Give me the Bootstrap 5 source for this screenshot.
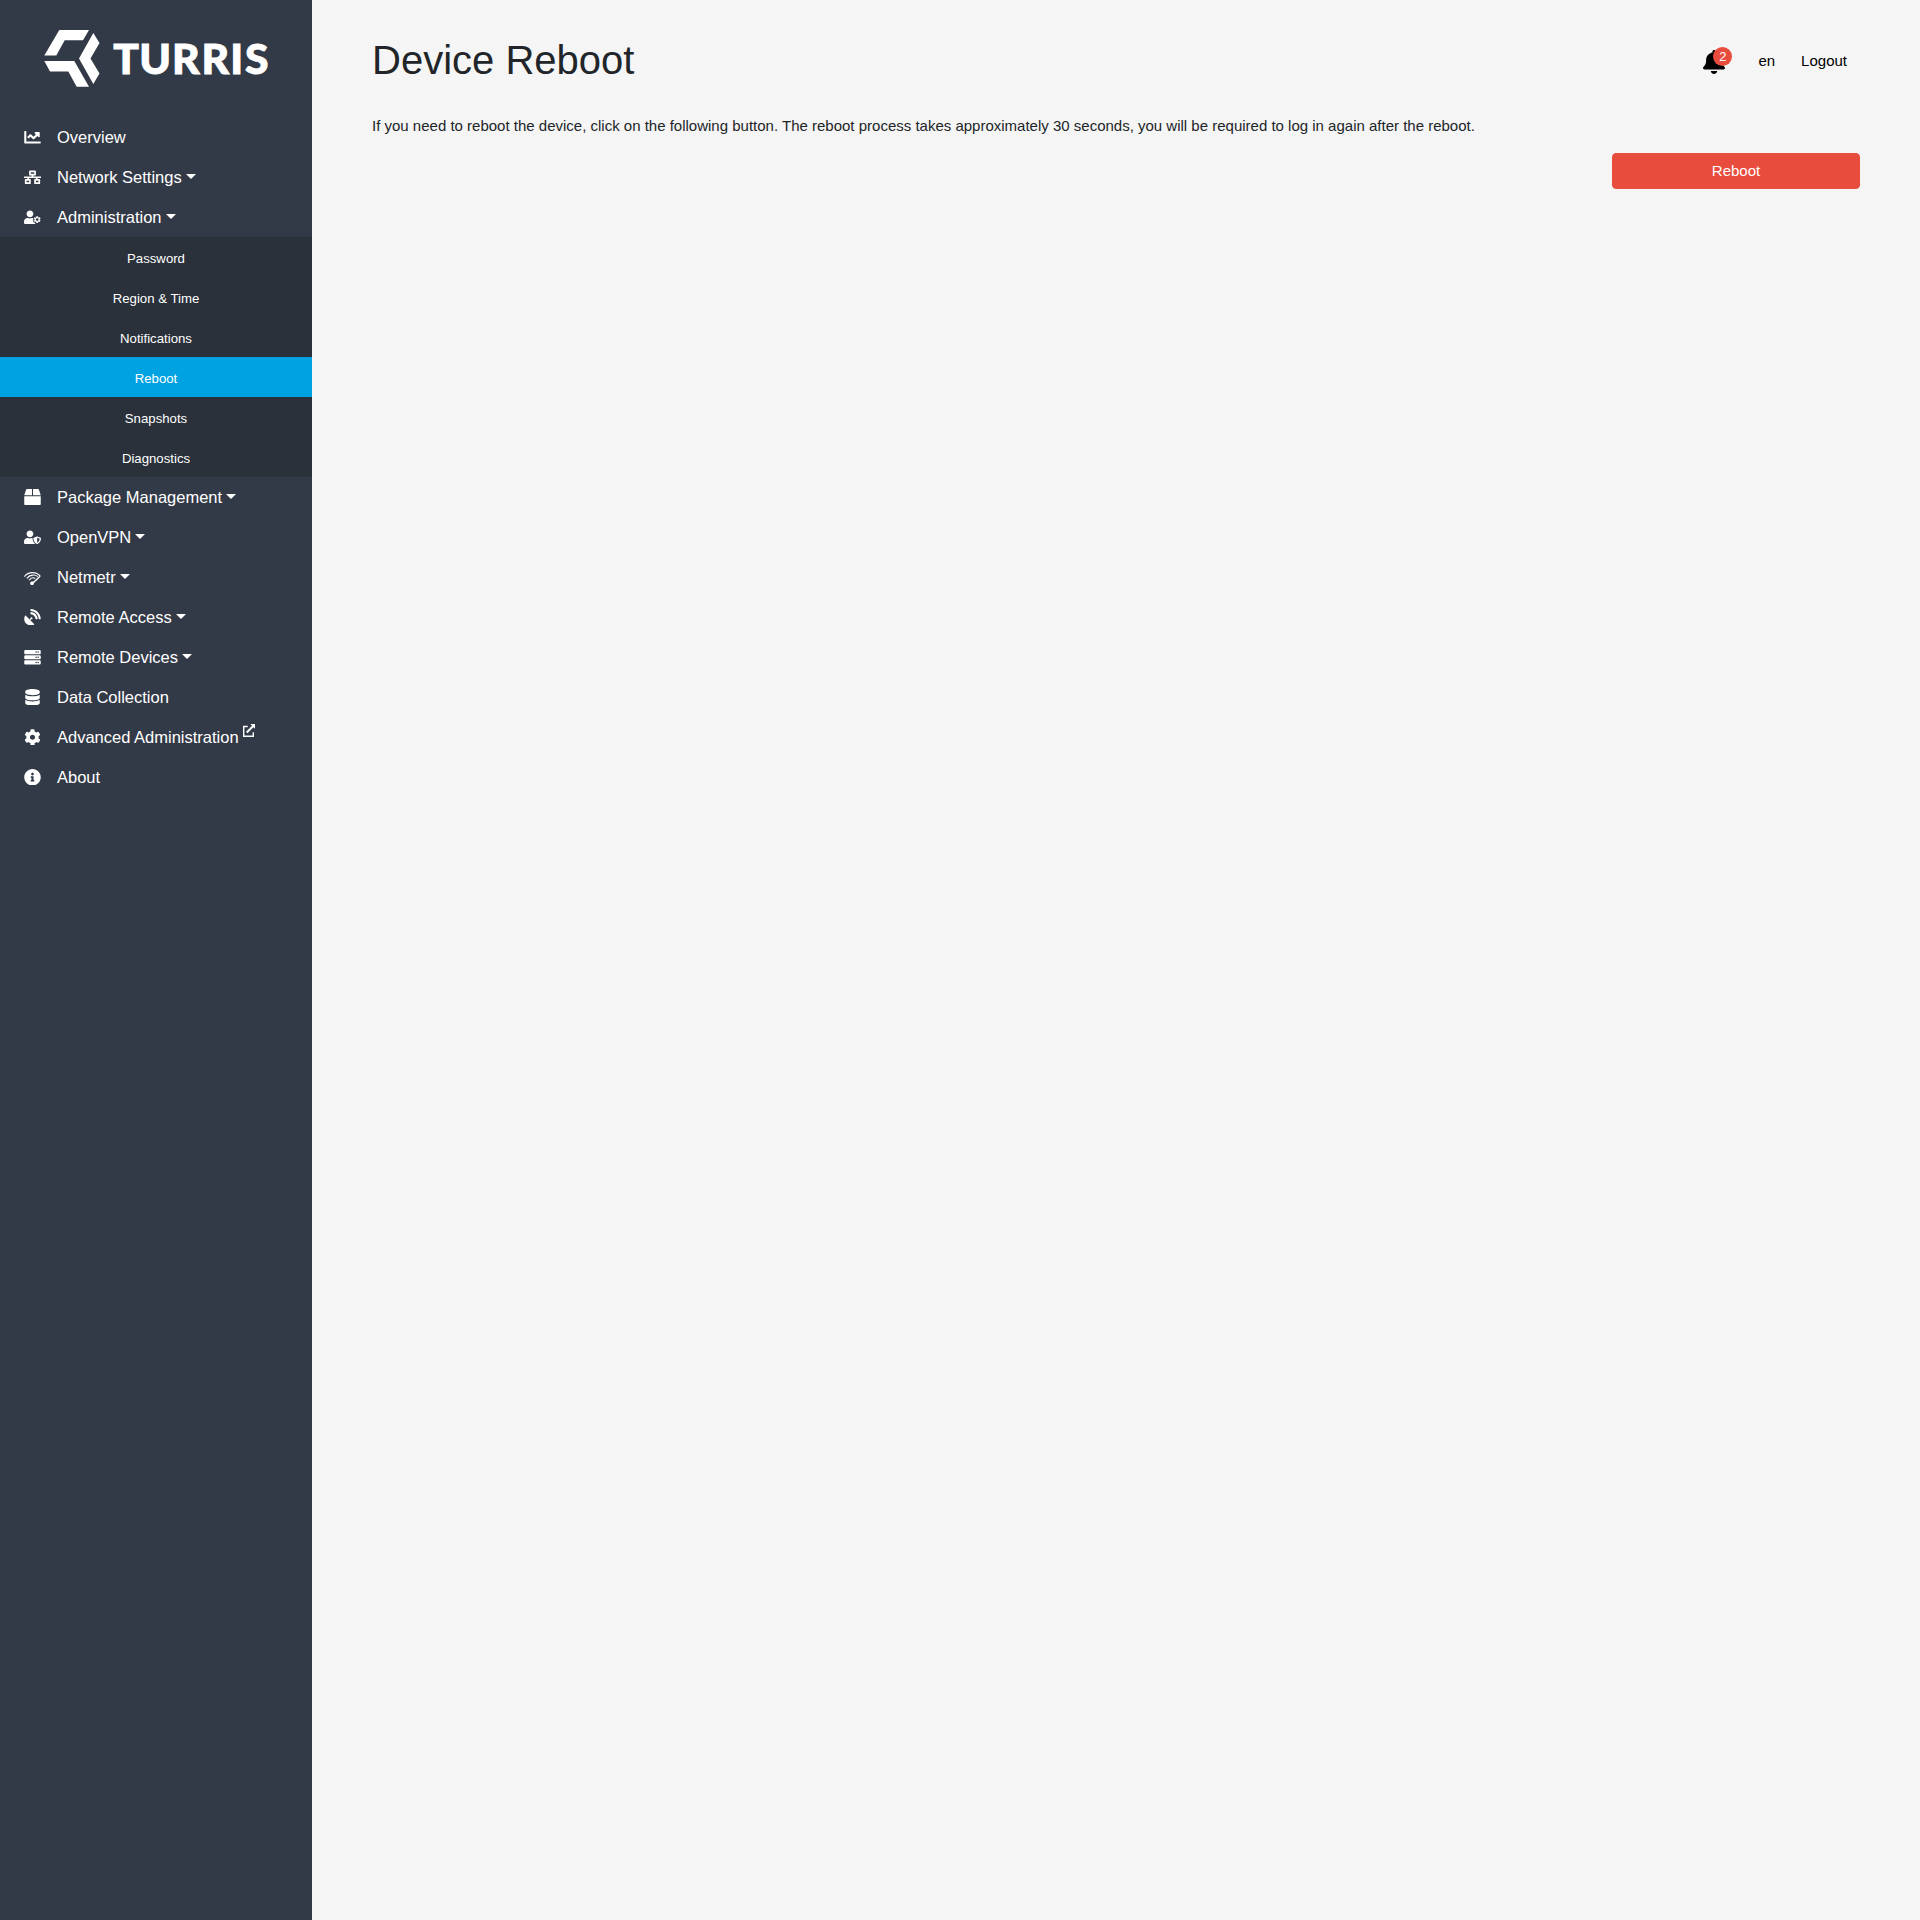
<!DOCTYPE html>
<html lang="en">
<head>
<meta charset="utf-8">
<meta name="viewport" content="width=device-width, initial-scale=1">
<title>Device Reboot | Turris</title>
<link href="https://cdn.jsdelivr.net/npm/bootstrap@5.3.0/dist/css/bootstrap.min.css" rel="stylesheet">
<style>
body{font-family:"Liberation Sans",Arial,sans-serif;font-size:15px;background:#f5f5f5;color:#212529}
.sidebar{width:312px;background:#333a47;font-size:16.5px}
.brand{height:117px;padding-top:28px}
.sidebar .nav-link{height:40px;padding:0 0 0 24px;color:#fff;display:flex;align-items:center;line-height:40px}
.sidebar .nav-link>svg{width:17px;height:16.5px;margin-right:16px;flex:none;fill:#fff}
.sidebar .dropdown-toggle::after{margin-left:4.2px;border-top:5px solid;border-right:5px solid transparent;border-left:5px solid transparent}
.sidebar .submenu{background:#2a313a;font-size:13.2px}
.sidebar .submenu .nav-link{padding:3px 0 0;justify-content:center}
.sidebar .submenu .nav-link.active{background:#00a2e2}
.ext{width:12px;height:13px;margin:-16px 0 0 4px;vertical-align:middle}
main{padding:32px 60px 0}
h1{font-size:40px;line-height:56px;margin:0;font-weight:400}
.topbar{gap:26px;padding:2px 13px 0 0}
.topbar a{color:#000;text-decoration:none}
.alerts{margin:2px 7px 0 0}
.bell{width:22px;height:24px}
.count{left:10px;top:-3px;width:19px;height:19px;font-size:13px;line-height:19px;background:#e74c3c}
.intro{padding-top:27px;margin-bottom:15px}
.btn-reboot{width:248px;height:36px;font-size:15px;line-height:22px;border-radius:4px;--bs-btn-color:#fff;--bs-btn-bg:#e74c3c;--bs-btn-border-color:#e74c3c;--bs-btn-hover-color:#fff;--bs-btn-hover-bg:#d62c1a}
</style>
</head>
<body>
<div class="d-flex min-vh-100">
<nav class="sidebar flex-shrink-0">
  <a class="brand d-block" href="#" aria-label="Turris">
    <svg class="d-block" width="312" height="62" viewBox="0 28 312 62" fill="#fff">
      <path d="M59.3 30H89L83 40.3H64.7L56.3 55.4H44.3ZM93.3 33L99.5 43L90.5 58.5L99.5 73.5L93.3 84L79 58.5ZM44.3 61H74.3L89 86.7H76.7L68.3 71.4H50Z"/>
      <text x="113.2 139.3 172 201.6 230.2 244.9" y="74" font-family="Lato, sans-serif" font-weight="900" font-size="42.6" stroke="#fff" stroke-width=".9">TURRIS</text>
    </svg>
  </a>
  <div class="nav flex-column flex-nowrap">
    <a class="nav-link" href="#"><svg viewBox="0 0 512 512"><path d="M496 384H64V80c0-8.84-7.16-16-16-16H16C7.16 64 0 71.16 0 80v336c0 17.67 14.33 32 32 32h464c8.84 0 16-7.16 16-16v-32c0-8.84-7.16-16-16-16zM464 96H345.94c-21.38 0-32.09 25.85-16.97 40.97l32.4 32.4L288 242.75l-73.37-73.37c-12.5-12.5-32.76-12.5-45.25 0l-68.69 68.69c-6.25 6.25-6.25 16.38 0 22.63l22.62 22.62c6.25 6.25 16.38 6.25 22.63 0L192 237.25l73.37 73.37c12.5 12.5 32.76 12.5 45.25 0l96-96 32.4 32.4c15.12 15.12 40.97 4.41 40.97-16.97V112c.01-8.84-7.15-16-15.99-16z"/></svg><span>Overview</span></a>
    <a class="nav-link" href="#"><svg viewBox="0 0 640 512"><path fill-rule="evenodd" d="M224 0h192q32 0 32 32v128q0 32-32 32h-64v32h288v64H512v32h64q32 0 32 32v128q0 32-32 32H416q-32 0-32-32V352q0-32 32-32h32v-32H192v32h32q32 0 32 32v128q0 32-32 32H64q-32 0-32-32V352q0-32 32-32h64v-32H0v-64h288v-32h-64q-32 0-32-32V32q0-32 32-32zM256 64v64h128V64zM96 384v64h96v-64zM448 384v64h96v-64z"/></svg><span>Network Settings<span class="dropdown-toggle"></span></span></a>
    <a class="nav-link" href="#"><svg viewBox="0 0 640 512"><path d="M224 256c70.7 0 128-57.3 128-128S294.7 0 224 0 96 57.3 96 128s57.3 128 128 128zM134 288C60.2 288 0 348.2 0 422.4V464c0 26.5 21.5 48 48 48h352c10 0 18-3 25-8v-31l-31-18-16 9-45-72 20-12v-37l-23-13 25-39c-13-2-27-3-41-3h-17c-46 21-100 21-146 0z"/><path fill-rule="evenodd" d="M463 216h68v42l25 14 36-21 34 58-36 21v29l36 21-34 58-36-21-25 15v42h-68v-42l-25-15-36 21-34-58 36-21v-29l-36-21 34-58 36 21 25-14zM497 294a51 51 0 1 0 0 102a51 51 0 1 0 0-102z"/></svg><span>Administration<span class="dropdown-toggle"></span></span></a>
    <div class="submenu">
      <a class="nav-link" href="#">Password</a>
      <a class="nav-link" href="#">Region &amp; Time</a>
      <a class="nav-link" href="#">Notifications</a>
      <a class="nav-link active" href="#">Reboot</a>
      <a class="nav-link" href="#">Snapshots</a>
      <a class="nav-link" href="#">Diagnostics</a>
    </div>
    <a class="nav-link" href="#"><svg viewBox="0 0 512 512"><path d="M509.5 184.6L458.9 32.8C452.4 13.2 434.1 0 413.4 0H272v192h238.7c-.4-2.5-.4-5-1.2-7.4zM240 0H98.6c-20.7 0-39 13.2-45.5 32.8L2.5 184.6c-.8 2.4-.8 4.9-1.2 7.4H240V0zM0 224v240c0 26.5 21.5 48 48 48h416c26.5 0 48-21.5 48-48V224H0z"/></svg><span>Package Management<span class="dropdown-toggle"></span></span></a>
    <a class="nav-link" href="#"><svg viewBox="0 0 640 512"><path d="M622.3 271.1l-115.2-45c-4.1-1.6-12.6-3.7-22.2 0l-115.2 45c-10.7 4.2-17.7 14-17.7 24.9 0 111.6 68.7 188.8 132.9 213.9 9.6 3.7 18 1.6 22.2 0C558.4 489.9 640 420.5 640 296c0-10.9-7-20.7-17.7-24.9zM496 462.4V273.3l95.5 37.3c-5.6 87.1-60.9 135.4-95.5 151.8zM224 256c70.7 0 128-57.3 128-128S294.7 0 224 0 96 57.3 96 128s57.3 128 128 128zm96 40c0-2.5.8-4.8 1.1-7.2-2.5-.1-4.9-.8-7.5-.8h-16.7c-22.2 10.2-46.9 16-72.9 16s-50.6-5.8-72.9-16h-16.7C60.2 288 0 348.2 0 422.4V464c0 26.5 21.5 48 48 48h352c6.8 0 13.3-1.5 19.2-4-54-42.9-99.2-116.7-99.2-212z"/></svg><span>OpenVPN<span class="dropdown-toggle"></span></span></a>
    <a class="nav-link" href="#"><svg viewBox="0 0 17 16.5"><g fill="none" stroke="#fff" stroke-width="1.1"><path d="M.4 7.6C4.5 2.4 12.3 2.4 16.4 7.3M2.8 9.4C5.8 5.4 10.8 5.2 13.8 7.6M5 11.3C6.8 8.7 9.5 8.4 11.3 9.4"/></g><path d="M15.4 7L16.4 7.8 9.8 14.2A1.8 1.8 0 1 1 7.6 12.6L9.4 12.4z"/></svg><span>Netmetr<span class="dropdown-toggle"></span></span></a>
    <a class="nav-link" href="#"><svg viewBox="0 0 512 512"><path d="M188.8 345.9l27.4-27.4c2.6.7 5 1.6 7.8 1.6 17.7 0 32-14.3 32-32s-14.3-32-32-32-32 14.3-32 32c0 2.8.9 5.2 1.6 7.8l-27.4 27.4L49.4 206.5c-7.3-7.3-20.1-6.1-25 3-41.8 77.8-29.9 176.7 35.7 242.3 65.6 65.6 164.6 77.5 242.3 35.7 9.2-4.9 10.4-17.7 3-25L188.8 345.9zM209 0c-9.2-.5-17 6.8-17 16v31.6c0 8.5 6.6 15.5 15 15.9 129.4 7 233.4 112 240.9 241.5.5 8.4 7.5 15 15.9 15h32.1c9.2 0 16.5-7.8 16-17C503.4 139.8 372.2 8.6 209 0zm.3 96c-9.3-.7-17.3 6.7-17.3 16.1v32.1c0 8.4 6.5 15.3 14.8 15.9 76.8 6.3 138 68.2 144.9 145.2.8 8.3 7.6 14.7 15.9 14.7h32.2c9.3 0 16.8-8 16.1-17.3-8.4-110.1-96.5-198.2-206.6-206.7z"/></svg><span>Remote Access<span class="dropdown-toggle"></span></span></a>
    <a class="nav-link" href="#"><svg viewBox="0 0 512 512"><path fill-rule="evenodd" d="M32 32h448q32 0 32 32v64q0 32-32 32H32q-32 0-32-32V64q0-32 32-32zM32 192h448q32 0 32 32v64q0 32-32 32H32q-32 0-32-32v-64q0-32 32-32zM32 352h448q32 0 32 32v64q0 32-32 32H32q-32 0-32-32v-64q0-32 32-32zM344 96a24 24 0 1 0 48 0a24 24 0 1 0-48 0zM408 96a24 24 0 1 0 48 0a24 24 0 1 0-48 0zM344 256a24 24 0 1 0 48 0a24 24 0 1 0-48 0zM408 256a24 24 0 1 0 48 0a24 24 0 1 0-48 0zM344 416a24 24 0 1 0 48 0a24 24 0 1 0-48 0zM408 416a24 24 0 1 0 48 0a24 24 0 1 0-48 0z"/></svg><span>Remote Devices<span class="dropdown-toggle"></span></span></a>
    <a class="nav-link" href="#"><svg viewBox="0 0 448 512"><path d="M448 73.143v45.714C448 159.143 347.667 192 224 192S0 159.143 0 118.857V73.143C0 32.857 100.333 0 224 0s224 32.857 224 73.143zM448 176v102.857C448 319.143 347.667 352 224 352S0 319.143 0 278.857V176c48.125 33.143 136.208 48.572 224 48.572S399.874 209.143 448 176zm0 160v102.857C448 479.143 347.667 512 224 512S0 479.143 0 438.857V336c48.125 33.143 136.208 48.572 224 48.572S399.874 369.143 448 336z"/></svg><span>Data Collection</span></a>
    <a class="nav-link" href="#"><svg viewBox="0 0 512 512"><path d="M487.4 315.7l-42.6-24.6c4.3-23.2 4.3-47 0-70.2l42.6-24.6c4.9-2.8 7.1-8.6 5.5-14-11.1-35.6-30-67.8-54.7-94.6-3.8-4.1-10-5.1-14.8-2.3L380.8 110c-17.9-15.4-38.5-27.3-60.8-35.1V25.8c0-5.6-3.9-10.5-9.4-11.7-36.7-8.2-74.3-7.8-109.2 0-5.5 1.2-9.4 6.1-9.4 11.7V75c-22.2 7.9-42.8 19.8-60.8 35.1L88.7 85.5c-4.9-2.8-11-1.9-14.8 2.3-24.7 26.7-43.6 58.9-54.7 94.6-1.7 5.4.6 11.2 5.5 14L67.3 221c-4.3 23.2-4.3 47 0 70.2l-42.6 24.6c-4.9 2.8-7.1 8.6-5.5 14 11.1 35.6 30 67.8 54.7 94.6 3.8 4.1 10 5.1 14.8 2.3l42.6-24.6c17.9 15.4 38.5 27.3 60.8 35.1v49.2c0 5.6 3.9 10.5 9.4 11.7 36.7 8.2 74.3 7.8 109.2 0 5.5-1.2 9.4-6.1 9.4-11.7v-49.2c22.2-7.9 42.8-19.8 60.8-35.1l42.6 24.6c4.9 2.8 11 1.9 14.8-2.3 24.7-26.7 43.6-58.9 54.7-94.6 1.5-5.5-.7-11.3-5.6-14.1zM256 336c-44.1 0-80-35.9-80-80s35.9-80 80-80 80 35.9 80 80-35.9 80-80 80z"/></svg><span>Advanced Administration<svg class="ext" viewBox="0 0 12 13" fill="#fff"><path d="M4.7 2.5H.7V12.3H10.3V8.2" fill="none" stroke="#fff" stroke-width="1.4"/><path d="M7.3 0H12V4.7L10.4 3.2 4.5 9.2 3 7.7 9 1.7z"/></svg></span></a>
    <a class="nav-link" href="#"><svg viewBox="8 8 496 496"><path d="M256 8C119.043 8 8 119.083 8 256c0 136.997 111.043 248 248 248s248-111.003 248-248C504 119.083 392.957 8 256 8zm0 110c23.196 0 42 18.804 42 42s-18.804 42-42 42-42-18.804-42-42 18.804-42 42-42zm56 254c0 6.627-5.373 12-12 12h-88c-6.627 0-12-5.373-12-12v-24c0-6.627 5.373-12 12-12h12v-64h-12c-6.627 0-12-5.373-12-12v-24c0-6.627 5.373-12 12-12h64c6.627 0 12 5.373 12 12v100h12c6.627 0 12 5.373 12 12v24z"/></svg><span>About</span></a>
  </div>
</nav>
<main class="flex-grow-1">
  <header class="d-flex justify-content-between align-items-center">
    <h1>Device Reboot</h1>
    <div class="topbar d-flex align-items-center">
      <a class="alerts position-relative d-block" href="#" aria-label="Notifications">
        <svg class="bell d-block" viewBox="0 0 448 512" preserveAspectRatio="none"><path d="M224 512c35.32 0 63.97-28.65 63.97-64H160.03c0 35.35 28.65 64 63.97 64zm215.39-149.71c-19.32-20.76-55.47-51.99-55.47-154.29 0-77.7-54.48-139.9-127.94-155.16V32c0-17.67-14.32-32-31.98-32s-31.98 14.33-31.98 32v20.84C118.56 68.1 64.08 130.3 64.08 208c0 102.3-36.15 133.53-55.47 154.29-6 6.45-8.66 14.16-8.61 21.71.11 16.4 12.98 32 32.1 32h383.8c19.12 0 32-15.6 32.1-32 .05-7.55-2.61-15.27-8.61-21.71z"/></svg>
        <span class="count position-absolute rounded-circle text-white text-center">2</span>
      </a>
      <a href="#">en</a>
      <a href="#">Logout</a>
    </div>
  </header>
  <p class="intro">If you need to reboot the device, click on the following button. The reboot process takes approximately 30 seconds, you will be required to log in again after the reboot.</p>
  <div class="d-flex justify-content-end"><button type="button" class="btn btn-reboot">Reboot</button></div>
</main>
</div>
<script src="https://cdn.jsdelivr.net/npm/bootstrap@5.3.0/dist/js/bootstrap.bundle.min.js"></script>
</body>
</html>
